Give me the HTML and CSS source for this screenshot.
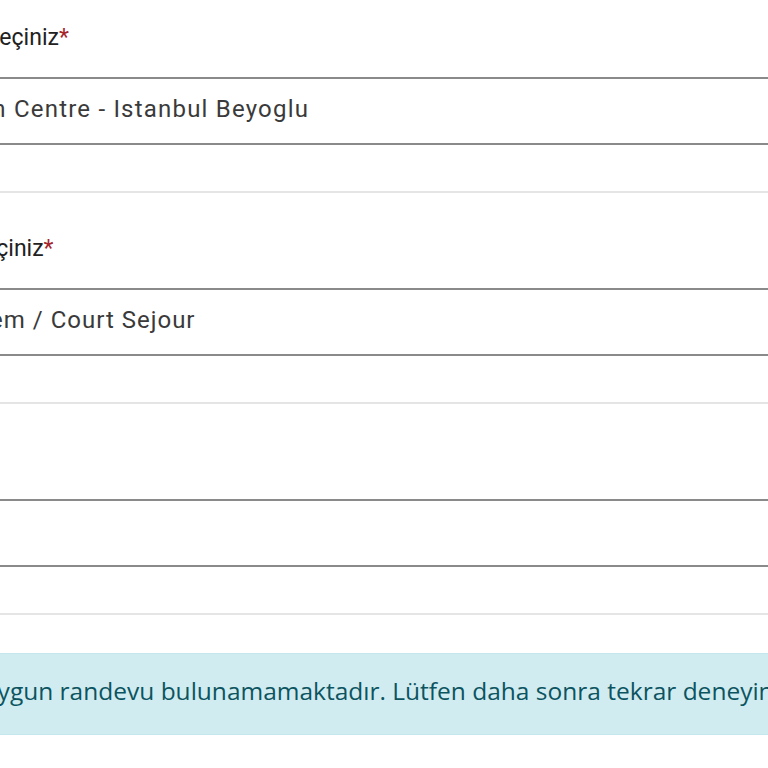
FILE: index.html
```html
<!DOCTYPE html>
<html lang="tr">
<head>
<meta charset="utf-8">
<title>Randevu</title>
<link rel="stylesheet" href="styles.css">
</head>
<body>
<main class="form">
  <section class="field">
    <label class="field__label">Başvuru merkezinizi seçiniz<span class="req">*</span></label>
    <div class="select"><span class="select__value">France Visa Application Centre - Istanbul Beyoglu</span></div>
  </section>
  <section class="field">
    <label class="field__label">Başvuru kategorisi seçiniz<span class="req">*</span></label>
    <div class="select select--category"><span class="select__value">Kısa Dönem / Court Sejour</span></div>
  </section>
  <section class="field">
    <label class="field__label">Alt kategori<span class="req">*</span></label>
    <div class="select"><span class="select__value"></span></div>
  </section>
  <div class="alert">Üzgünüz, şu anda uygun randevu bulunamamaktadır. Lütfen daha sonra tekrar deneyin.</div>
</main>
</body>
</html>
```
FILE: styles.css
```css
html, body {
  margin: 0;
  padding: 0;
  overflow: hidden;
  background: #ffffff;
}

body {
  font-family: Roboto, "Noto Sans", "Liberation Sans", sans-serif;
}

.form {
  margin: -18px 0 0 -290px;
  width: calc(100% + 400px);
}

.field {
  padding-top: 39px;
  padding-bottom: 46px;
  border-bottom: 2px solid #e5e5e5;
}

.field__label {
  display: block;
  padding-left: 67px;
  font-size: 23px;
  line-height: 33px;
  color: #212121;
  white-space: nowrap;
}

.req {
  color: #a4262c;
}

.select {
  margin-top: 23px;
  height: 32px;
  padding: 14px 0 18px 16px;
  border: 2px solid #8a8a8a;
  font-size: 24px;
  line-height: 32px;
  letter-spacing: 1.2px;
  color: #3a3a3a;
  white-space: nowrap;
}

.select--category {
  text-indent: 159px;
  letter-spacing: 1px;
}

.alert {
  margin-top: 38px;
  padding: 20px 0 26px 63px;
  border: 1px solid #c4e6ec;
  background: #d1ecf1;
  color: #0c5460;
  font-family: "Open Sans", "Noto Sans", sans-serif;
  font-size: 24.5px;
  line-height: 34px;
  white-space: nowrap;
}
```
